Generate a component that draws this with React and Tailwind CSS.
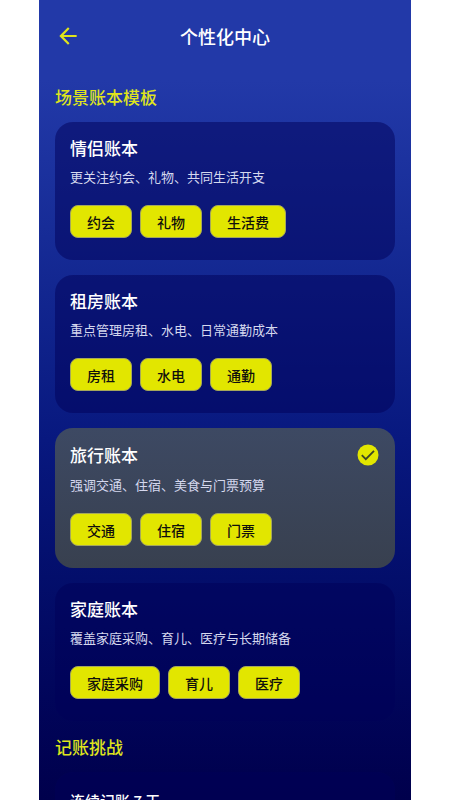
const templates = [
  {
    id: "couple",
    title: "情侣账本",
    description: "更关注约会、礼物、共同生活开支",
    tags: ["约会", "礼物", "生活费"],
  },
  {
    id: "rent",
    title: "租房账本",
    description: "重点管理房租、水电、日常通勤成本",
    tags: ["房租", "水电", "通勤"],
  },
  {
    id: "travel",
    title: "旅行账本",
    description: "强调交通、住宿、美食与门票预算",
    tags: ["交通", "住宿", "门票"],
    selected: true,
  },
  {
    id: "family",
    title: "家庭账本",
    description: "覆盖家庭采购、育儿、医疗与长期储备",
    tags: ["家庭采购", "育儿", "医疗"],
  },
];

function BackIcon() {
  return (
    <svg viewBox="0 0 24 24" className="size-[26px]" fill="currentColor" aria-hidden="true">
      <path d="M20 11H7.83l5.59-5.59L12 4l-8 8 8 8 1.41-1.41L7.83 13H20v-2z" />
    </svg>
  );
}

function CheckIcon() {
  return (
    <svg viewBox="0 0 24 24" className="size-6" aria-hidden="true">
      <circle cx="12" cy="12" r="10.5" fill="#e2e600" />
      <path d="M5.8 12.2l4 4 8.2-8.4" fill="none" stroke="#3b4426" strokeWidth="1.8" />
    </svg>
  );
}

function TemplateCard({ template }) {
  const { title, description, tags, selected } = template;

  return (
    <article
      className={
        selected
          ? "rounded-[18px] bg-linear-to-b from-[#3d4963] to-[#38404f] px-[15px] pt-[15px] pb-[22px]"
          : "rounded-[18px] bg-[#000058]/50 px-[15px] pt-[15px] pb-[22px]"
      }
    >
      <div className="flex items-center justify-between">
        <h3 className="text-[17px] leading-[22px] font-medium text-white">{title}</h3>
        {selected && <CheckIcon />}
      </div>
      <p className="mt-2 text-[13px] leading-5 text-[#d5d8ee]">{description}</p>
      <div className="mt-[18px] flex flex-wrap gap-2">
        {tags.map((tag) => (
          <button
            key={tag}
            type="button"
            className="h-[33px] rounded-lg border border-[#a5a75c] bg-[#e2e600] px-4 text-sm font-medium text-[#10100c]"
          >
            {tag}
          </button>
        ))}
      </div>
    </article>
  );
}

export default function App() {
  return (
    <div className="h-screen overflow-hidden bg-white px-[39px] font-['Noto_Sans_CJK_SC',sans-serif]">
      <main className="h-full overflow-hidden bg-linear-to-b from-[#2239a8] from-10% via-[#08187f] via-55% to-[#00004c] px-4">
        <header className="grid h-[72px] grid-cols-[26px_1fr_26px] items-center">
          <button type="button" aria-label="返回" className="text-[#dfe41c]">
            <BackIcon />
          </button>
          <h1 className="text-center text-lg font-medium text-white">个性化中心</h1>
        </header>

        <section>
          <h2 className="pt-3 pb-3 text-[17px] leading-[26px] font-medium text-[#dfe41c]">
            场景账本模板
          </h2>
          <div className="flex flex-col gap-[15px]">
            {templates.map((template) => (
              <TemplateCard key={template.id} template={template} />
            ))}
          </div>
        </section>

        <section>
          <h2 className="pt-[13px] pb-3 text-[17px] leading-[26px] font-medium text-[#dfe41c]">
            记账挑战
          </h2>
          <article className="rounded-[18px] bg-[#000058]/50 px-[15px] pt-[18px] pb-[22px]">
            <h3 className="text-[15px] leading-[22px] font-medium text-white">连续记账 7 天</h3>
          </article>
        </section>
      </main>
    </div>
  );
}
